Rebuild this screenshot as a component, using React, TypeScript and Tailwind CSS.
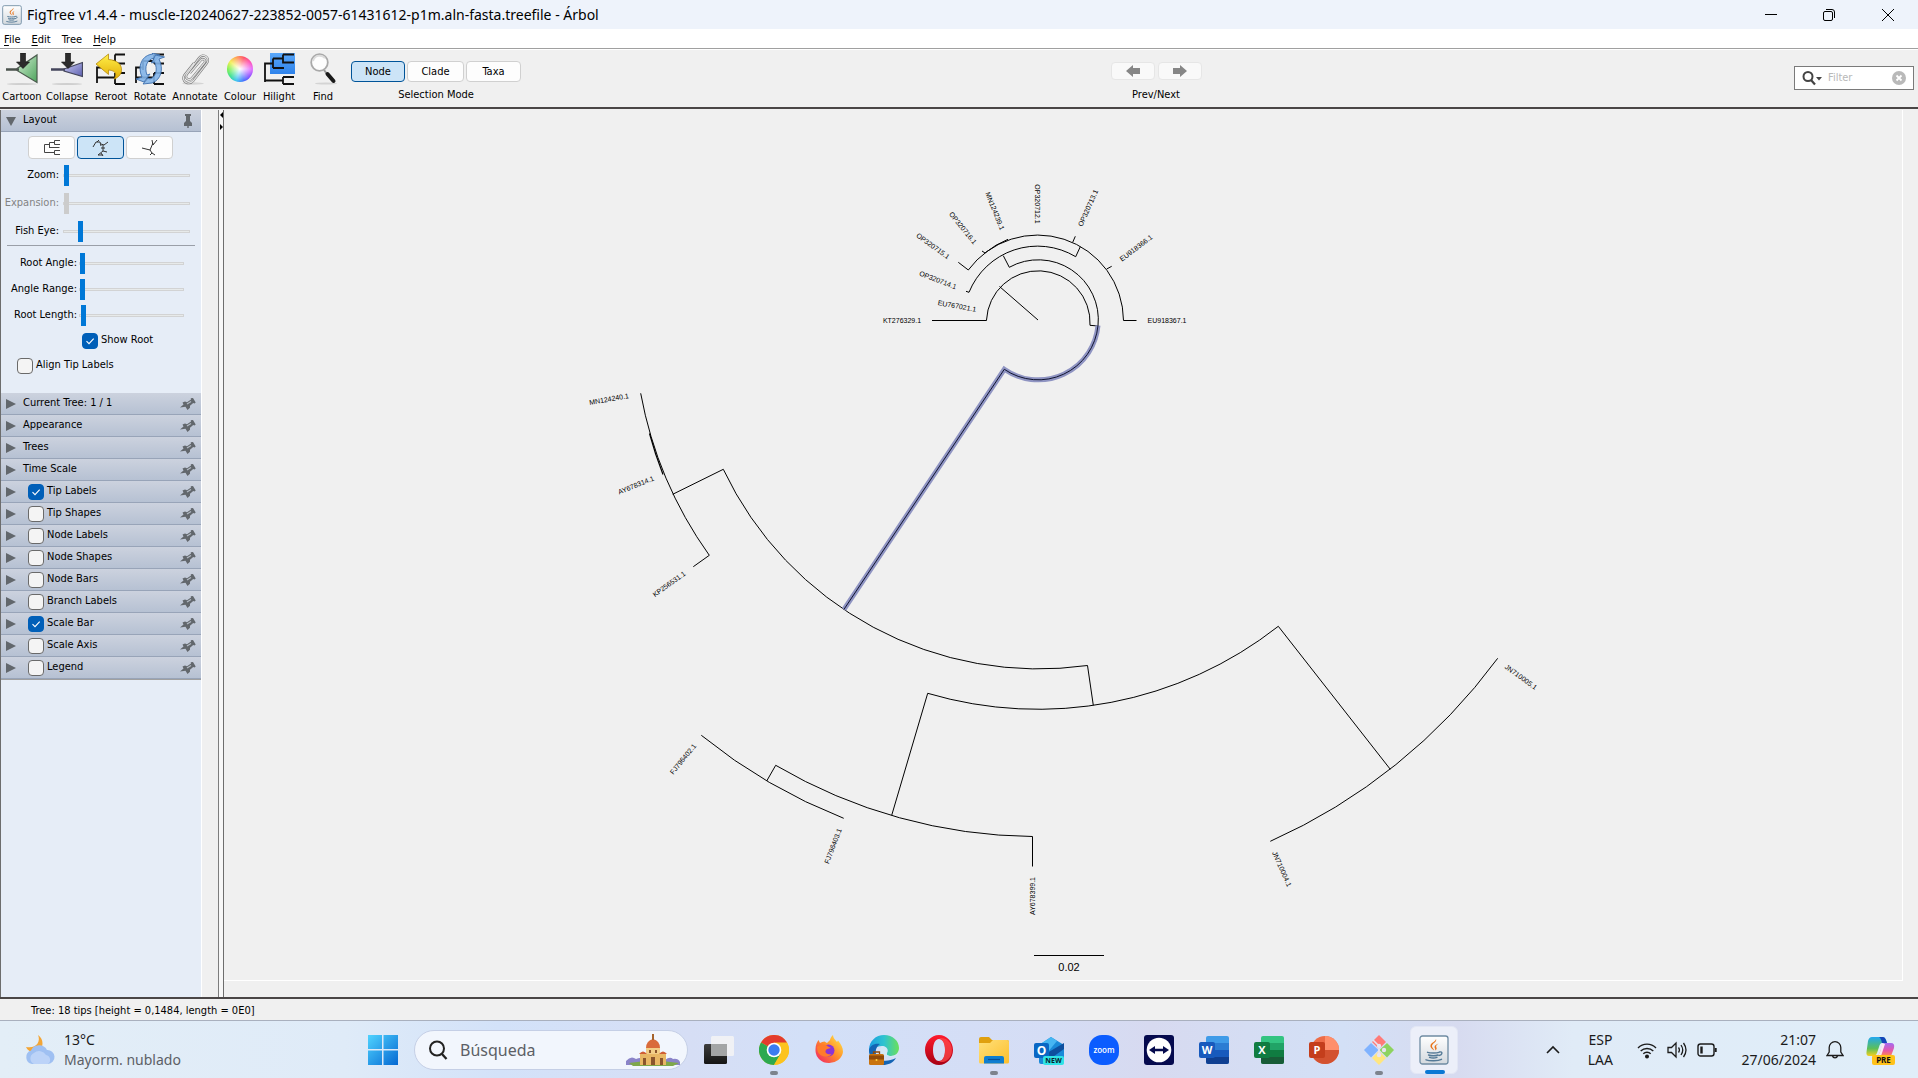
import React from "react";

const UI = "font-['DejaVu_Sans_Condensed','DejaVu_Sans',sans-serif] [font-stretch:condensed]";

/* ---------- small icons ---------- */

function JavaIcon({ className }: { className: string }) {
  return (
    <svg viewBox="0 0 30 30" className={className}>
      <defs>
        <linearGradient id="jv" x1="0" y1="0" x2="0" y2="1">
          <stop offset="0" stopColor="#ffffff" />
          <stop offset="1" stopColor="#d3d9de" />
        </linearGradient>
      </defs>
      <rect x="1" y="1" width="28" height="28" rx="2.5" fill="url(#jv)" stroke="#6f8ca3" strokeWidth="1.3" />
      <path d="M17 4c1.500 3-4.500 4.500-4 7.500.2 1.600 2 2.300 2.200 4-2.500-1.500-4.200-3-3.700-5.200C12.200 7.500 16.500 7 17 4z" fill="#e8731a" />
      <path d="M19.500 8.500c-2 .8-4 1.700-4 3.600 0 1.300 1.300 1.600.6 3.400 1.700-1 1.900-2.100 1.200-3.300-.8-1.300.7-2.500 2.200-3.700z" fill="#e8731a" />
      <path d="M8.500 17.300c3 1 9 1 11.500 0M9.500 20c2.700.9 7 .9 9.500 0M10.500 22.300c2 .7 5.500.7 7.500 0M20.500 17c3.500-.8 3 3-.5 3.500M7 24.800c4 1.500 12 1.300 15.500-.5" fill="none" stroke="#557a97" strokeWidth="1.4" strokeLinecap="round" />
    </svg>
  );
}

function ForkPaths() {
  return (
    <path d="M2 30V14.500h7M2 24.500h18M9 8v9M9 8h11M20 1.500v9M20 1.500h10M20 10.500h10M20 20v11M20 20h10M20 31h10" fill="none" stroke="#111" strokeWidth="1.800" />
  );
}

function ToolIcon({ name }: { name: string }) {
  const shadow = <ellipse cx="16" cy="31" rx="15" ry="1" fill="#cfcfcf" />;
  const down = <path d="M14.500 0h5v9h4l-6.500 6.500L10.500 9h4z" fill="#2c2c2c" stroke="#111" strokeWidth=".6" />;
  return (
    <svg viewBox="0 0 32 32" className="h-8 w-8">
      <defs>
        <linearGradient id="gGreen" x1="0" y1="0" x2="1" y2="1">
          <stop offset="0" stopColor="#d5f0d5" />
          <stop offset="1" stopColor="#4da45c" />
        </linearGradient>
        <linearGradient id="gPurple" x1="0" y1="0" x2="1" y2="1">
          <stop offset="0" stopColor="#c9caf2" />
          <stop offset="1" stopColor="#5d60b0" />
        </linearGradient>
        <linearGradient id="gBlue" x1="0" y1="0" x2="0" y2="1">
          <stop offset="0" stopColor="#5aa8fa" />
          <stop offset="1" stopColor="#2e82ea" />
        </linearGradient>
        <linearGradient id="gYellow" x1="0" y1="0" x2="0" y2="1">
          <stop offset="0" stopColor="#fff04a" />
          <stop offset="1" stopColor="#e3ae08" />
        </linearGradient>
      </defs>
      {name === "Cartoon" && (
        <>
          {shadow}
          <path d="M11 15.500 31 2v27.500L11 17.500z" fill="url(#gGreen)" stroke="#4b5b4e" strokeWidth="1.200" />
          <path d="M0 16.500h13" stroke="#4a524c" strokeWidth="2.500" />
          {down}
        </>
      )}
      {name === "Collapse" && (
        <>
          {shadow}
          <path d="M13 16 31.500 9.500V23.500L13 18z" fill="url(#gPurple)" stroke="#44465c" strokeWidth="1.200" />
          <path d="M0 16.500h14" stroke="#44465c" strokeWidth="2.500" />
          {down}
        </>
      )}
      {name === "Reroot" && (
        <>
          <ForkPaths />
          <path d="M1 11 13.500 1v5.500c8 .5 13.500 4.500 13 11-.4 4.600-4 7.500-7.500 8.500 3-4 2.500-8.500-5.500-9v4.500z" fill="url(#gYellow)" stroke="#b68a0c" strokeWidth=".8" />
        </>
      )}
      {name === "Rotate" && (
        <>
          <ForkPaths />
          <g fill="#83b4e8" stroke="#3d6fae" strokeWidth=".9" fillOpacity=".9">
            <path d="M8 24C3 13 8 2 19 1l-1-1 8 2-5 6-.5-3C13 6 10 14 13 22l3-1-6 8-8-3z" />
            <path d="M25 6c5 10 2 21-7 24l-9 1 5-6 2 1c6-2 8-10 4.500-17l-3 1 4-8 9 2z" />
          </g>
        </>
      )}
      {name === "Annotate" && (
        <>
          <ellipse cx="14" cy="30.500" rx="11" ry="1.200" fill="#d4d4d4" />
          <path d="M11 20 22 7c2-2.300 5.300.2 3.500 2.600L13 25c-3 3.600-8 0-5-4L20 5c4-5.500 11.500-.5 8 5L14.500 27.500c-5 5.800-13 .5-9-5.500L15 10" fill="none" stroke="#777" strokeWidth="2.300" />
          <path d="M11 20 22 7c2-2.300 5.300.2 3.500 2.600L13 25c-3 3.600-8 0-5-4L20 5c4-5.500 11.500-.5 8 5L14.500 27.500c-5 5.800-13 .5-9-5.500L15 10" fill="none" stroke="#e4e4e4" strokeWidth="1.200" />
        </>
      )}
      {name === "Hilight" && (
        <>
          <rect x="7" y="0" width="25" height="21" fill="url(#gBlue)" />
          <path d="M2 29V14.500M2 18.500v-8h8M10 5.500V15M10 5.500h10M10 15h11M20 1.500h11M20 1.500v8h11M2 27.500h18M20 24v7M20 24h11M20 31h11" fill="none" stroke="#111" strokeWidth="1.800" />
        </>
      )}
      {name === "Find" && (
        <>
          <ellipse cx="19" cy="30.500" rx="11" ry="1" fill="#d4d4d4" />
          <path d="m17 17 3 4" stroke="#999" strokeWidth="2" />
          <path d="m20.500 21 6 7" stroke="#1a1a1a" strokeWidth="4" strokeLinecap="round" />
          <circle cx="12.500" cy="9.500" r="8.300" fill="#fdfdfd" stroke="#a9a9a9" strokeWidth="1.800" />
          <path d="M6 8a7 7 0 0 1 12-3" stroke="#dcdcdc" strokeWidth="2" fill="none" />
        </>
      )}
    </svg>
  );
}

function ColourWheel() {
  return (
    <span className="flex h-8 w-8 items-center justify-center">
      <span className="h-[26px] w-[26px] rounded-full bg-[radial-gradient(circle,#fff_0%,#ffffff00_70%),conic-gradient(from_90deg,#e36bff,#8a4bff,#3f6bff,#35c3f0,#35e08a,#7cf04a,#f3ef4d,#ff9c4d,#ff4b5c,#ff4bb0,#e36bff)]" />
    </span>
  );
}

function Pin({ up = false }: { up?: boolean }) {
  return up ? (
    <svg viewBox="0 0 16 16" className="h-4 w-4">
      <path d="M5 1h6v2h-1v5l2 2v3H4v-3l2-2V3H5zM7.300 12h1.400v3H7.300z" fill="#62676c" />
    </svg>
  ) : (
    <svg viewBox="0 0 16 16" className="h-4 w-4">
      <path d="M0 11.500 3.500 8.500 2.500 6.500 5 5.500l2 .8L11 3.500l-.3-1.300L13 2l2.700 4.500-1.200 1L13.200 7 10 9.800v2L7.500 14 5.500 10.800z" fill="#62676c" />
      <path d="m7 8 4-2.500" stroke="#b5bcc6" strokeWidth="1.100" />
    </svg>
  );
}

/* ---------- controls ---------- */

function Check({ id, label, checked = false }: { id: string; label: string; checked?: boolean }) {
  return (
    <label htmlFor={id} className="flex items-center gap-[3px]">
      <span className="relative flex h-4 w-4">
        <input
          id={id}
          type="checkbox"
          defaultChecked={checked}
          className="peer h-4 w-4 appearance-none rounded-[4px] border border-[#6a6a6a] bg-[#f4f4f4] checked:border-[#005fb8] checked:bg-[#005fb8]"
        />
        <svg viewBox="0 0 16 16" className="pointer-events-none absolute inset-0 hidden h-4 w-4 peer-checked:block">
          <path d="m4.500 8.200 2.500 2.500 4.700-5" fill="none" stroke="#fff" strokeWidth="1.100" />
        </svg>
      </span>
      <span>{label}</span>
    </label>
  );
}

function SliderRow({ label, value, disabled = false, root = false }: { label: string; value: number; disabled?: boolean; root?: boolean }) {
  const id = "s-" + label.replace(" ", "-");
  return (
    <div className={root ? "flex h-[26px] items-center pr-[17px]" : "flex h-7 items-center pr-[11px]"}>
      <label htmlFor={id} className={(root ? "w-[76px]" : "w-[58px]") + " shrink-0 text-right whitespace-nowrap " + (disabled ? "text-[#838383]" : "")}>
        {label}:
      </label>
      <input
        id={id}
        type="range"
        min={0}
        max={1000}
        defaultValue={value}
        disabled={disabled}
        className={
          (root ? "ml-[2px]" : "ml-1") +
          " h-[21px] w-full min-w-0 appearance-none bg-transparent [&::-webkit-slider-runnable-track]:h-[3px] [&::-webkit-slider-runnable-track]:border [&::-webkit-slider-runnable-track]:border-[#d2d3d4] [&::-webkit-slider-runnable-track]:bg-[#e7eaea] [&::-webkit-slider-thumb]:-mt-[10px] [&::-webkit-slider-thumb]:h-[21px] [&::-webkit-slider-thumb]:w-[5px] [&::-webkit-slider-thumb]:appearance-none " +
          (disabled ? "[&::-webkit-slider-thumb]:bg-[#cccccc]" : "[&::-webkit-slider-thumb]:bg-[#0078d7]")
        }
      />
    </div>
  );
}

const header = "flex h-[22px] items-center border-b border-[#98a4b8] bg-linear-to-b from-[#ccd2de] to-[#b6c1d3] pr-[5px] pl-[5px]";

function Section({ title, check, on }: { title: string; check?: boolean; on?: boolean }) {
  return (
    <div className={header}>
      <button aria-label={"Expand " + title} className="flex h-3 w-[22px] items-center">
        <svg viewBox="0 0 10 10" className="h-[10px] w-[10px]">
          <path d="M0 0 10 5 0 10z" fill="#62676c" />
        </svg>
      </button>
      {check ? (
        <Check id={"c-" + title.replace(" ", "-")} label={title} checked={on} />
      ) : (
        <span className="-ml-[5px]">{title}</span>
      )}
      <button aria-label={"Pin " + title} className="ml-auto">
        <Pin />
      </button>
    </div>
  );
}

/* ---------- tree ---------- */

const CX = 1038;
const CY = 320;

const tips: { t: string; x: number; y: number; a: number }[] = [
  { t: "KT276329.1", x: 902, y: 320, a: 0 },
  { t: "EU767021.1", x: 957, y: 306, a: 10 },
  { t: "OP320714.1", x: 938, y: 280, a: 21 },
  { t: "OP320715.1", x: 933, y: 246, a: 36 },
  { t: "OP320716.1", x: 963, y: 228, a: 51 },
  { t: "MN124239.1", x: 995, y: 211, a: 68 },
  { t: "OP320712.1", x: 1037, y: 204, a: 90 },
  { t: "OP320713.1", x: 1088, y: 208, a: -66 },
  { t: "EU918366.1", x: 1136, y: 248, a: -37 },
  { t: "EU918367.1", x: 1167, y: 320, a: 0 },
  { t: "MN124240.1", x: 609, y: 399, a: -10 },
  { t: "AY678314.1", x: 636, y: 485, a: -22 },
  { t: "KP256531.1", x: 669, y: 584, a: -36 },
  { t: "FJ796402.1", x: 683, y: 759, a: -51 },
  { t: "FJ796403.1", x: 833, y: 846, a: -69 },
  { t: "AY678399.1", x: 1032, y: 896, a: -90 },
  { t: "JN710004.1", x: 1282, y: 869, a: 66 },
  { t: "JN710005.1", x: 1521, y: 677, a: 36 },
];

const highlight = "M1098 325.500A60 60 0 0 1 1004.300 369.300L844 609.300";

function TreeDrawing() {
  return (
    <svg viewBox="224 110 1678 870" className="h-full w-full" role="img" aria-label="Polar tree">
      <g fill="none" stroke="#000" strokeWidth="1">
        <path d={`M${CX} ${CY} 999.500 286.500`} />
        <path d="M932 320.500h54.500V320A51.600 51.600 0 1 1 1090 325.300L1098 326" />
        <path d="M1098 326A60 60 0 0 0 1009.300 267.300L1003.300 255.700" />
        <path d="M966 291.300 969 292.300A74 74 0 0 1 1075.700 256.700L1080.300 246.700" />
        <path d="M958.300 262.300 968.300 270A86 86 0 0 1 1123.500 320.500H1136.500" />
        <path d="M982 251 985 253A86 86 0 0 1 1008 239.300" />
        <path d="M1072.700 242.300 1075.300 236.300M1106.700 269 1111.700 266.300" />
        <path d="M723.300 469.300A349 349 0 0 0 1087.500 665.500L1093.300 705.300" />
        <path d="M672.700 494.300 723.300 469.300" />
        <path d="M640.700 393.300A404.500 404.500 0 0 0 709.300 555.300L693.300 566.700" />
        <path d="M649.500 433.500A404.500 404.500 0 0 0 663 474.500" strokeWidth="1.200" />
        <path d="M927.700 693.300A389.200 389.200 0 0 0 1278.300 626.300L1390.300 769.300" />
        <path d="M1270.300 841.300A570.600 570.600 0 0 0 1497.700 658.300" />
        <path d="M927.700 693.300 891.700 815.300" />
        <path d="M766.700 781 775.700 765.300A516.500 516.500 0 0 0 1032.500 836.500V866.500" />
        <path d="M701.300 735.300A535 535 0 0 0 843.700 818.300" />
      </g>
      <path d={highlight} fill="none" stroke="#8f94c2" strokeWidth="5" />
      <path d={highlight} fill="none" stroke="#101431" strokeWidth="1" />
      <g className="font-['Liberation_Sans',Arial,sans-serif] text-[7px]" fill="#000" textAnchor="middle">
        {tips.map((p) => (
          <text key={p.t} transform={`translate(${p.x} ${p.y}) rotate(${p.a})`} dominantBaseline="central">
            {p.t}
          </text>
        ))}
      </g>
      <path d="M1034 955.500h70" stroke="#000" />
      <text x="1069" y="971" textAnchor="middle" className="font-['Liberation_Sans',Arial,sans-serif] text-[11px]">
        0.02
      </text>
    </svg>
  );
}

/* ---------- taskbar ---------- */

function AppIcon({ name }: { name: string }) {
  const office = (c: string[], letter: string, box: string) => (
    <>
      <rect x="7" y="1" width="23" height="28" rx="2" fill={c[0]} />
      <path d="M7 8h23v7H7z" fill={c[1]} />
      <path d="M7 15h23v7H7z" fill={c[2]} />
      <path d="M7 22h23v5a2 2 0 0 1-2 2H9a2 2 0 0 1-2-2z" fill={c[3]} />
      <rect x="0" y="7" width="16" height="16" rx="2" fill={box} />
      <text x="8" y="19" textAnchor="middle" fontSize="11" fontWeight="700" fill="#fff">{letter}</text>
    </>
  );
  return (
    <svg viewBox="0 0 30 30" className="h-[30px] w-[30px] font-['Open_Sans',sans-serif]">
      <defs>
        <linearGradient id="aEdge" x1="0" y1="0" x2="1" y2="0">
          <stop offset="0" stopColor="#1b9de2" /><stop offset=".5" stopColor="#2fc3d0" /><stop offset="1" stopColor="#6be05a" />
        </linearGradient>
        <linearGradient id="aFf" x1="1" y1="0" x2="0" y2="1">
          <stop offset="0" stopColor="#fff04a" /><stop offset=".5" stopColor="#ff8a2a" /><stop offset="1" stopColor="#f0196e" />
        </linearGradient>
        <linearGradient id="aOp" x1="0" y1="0" x2="0" y2="1">
          <stop offset="0" stopColor="#ff1b2d" /><stop offset="1" stopColor="#a70014" />
        </linearGradient>
        <linearGradient id="aFold" x1="0" y1="0" x2="1" y2="1">
          <stop offset="0" stopColor="#ffe07a" /><stop offset="1" stopColor="#fcbf2c" />
        </linearGradient>
        <linearGradient id="aWin" x1="0" y1="0" x2="1" y2="1">
          <stop offset="0" stopColor="#4fd3ff" /><stop offset="1" stopColor="#0568d2" />
        </linearGradient>
        <linearGradient id="aTv" x1="0" y1="0" x2="0" y2="1">
          <stop offset="0" stopColor="#3d3d3d" /><stop offset="1" stopColor="#151515" />
        </linearGradient>
      </defs>
      {name === "Inicio" && <path d="M0 0h14v14H0zM15.500 0H30v14H15.500zM0 15.500h14V30H0zM15.500 15.500H30V30H15.500z" fill="url(#aWin)" />}
      {name === "Vista de tareas" && (
        <>
          <rect x="0" y="9" width="23" height="20" rx="1.500" fill="url(#aTv)" />
          <rect x="7" y="1" width="23" height="20" rx="1.500" fill="#f4f4f4" fillOpacity=".85" />
          <path d="M7 9h16v12H7z" fill="#a3a5a6" />
        </>
      )}
      {name === "Chrome" && (
        <>
          <circle cx="15" cy="15" r="15" fill="#fcc31e" />
          <path d="M15 15 2 7.500A15 15 0 0 1 28 7.500z" fill="#e33b2e" />
          <path d="M15 15 2 7.500A15 15 0 0 0 15 30l6.500-11z" fill="#2da94f" />
          <path d="M15 7.500h13A15 15 0 0 1 15 30l6.500-11z" fill="#fcc31e" />
          <circle cx="15" cy="15" r="7.300" fill="#fff" />
          <circle cx="15" cy="15" r="5.700" fill="#3a7cf0" />
        </>
      )}
      {name === "Firefox" && (
        <>
          <path d="M1.500 14C1.500 10 3 7 4.500 5l1.500 3c1.500-1 3-1.500 4.500-1.500L13 8l3-3c.5-2 1.500-4 3-5 0 3 2 4.500 4 7l1-1.500c3 3.500 5 7 5 11.500a13.800 12.500 0 0 1-27.500-1z" fill="url(#aFf)" />
          <circle cx="14.500" cy="15.500" r="6" fill="#8a34d6" />
          <path d="M3 12c3-3 8-3.500 11-.5l3 1.500c-3 .5-5 1-5.500 3s2.500 4 6 3c-3 4.500-12 3-14-3z" fill="#ff7b2c" />
        </>
      )}
      {name === "Edge" && (
        <>
          <path d="M0 15C0 6 7 0 15 0c9 0 15 6 15 13 0 5-4 8-8 8-3 0-5-1-4-3 2-3 0-7-5-7C7 11 0 15 0 20z" fill="url(#aEdge)" />
          <path d="M0 15c1-4 5-7 11-6-3 2-5 6-4 10 2 7 10 9 20 4-3 5-8 7-13 7C6 30 0 23 0 15z" fill="#1464b4" />
          <path d="M13 11c4 0 6 4 5 7-1 2 1 3 4 3 3 0 6-1 8-4-1 4-4 5-8 5-6 0-10-3-11-6 0-2 1-4 2-5z" fill="#d3e8f6" />
          <rect x="0" y="19" width="15" height="11" rx="1.500" fill="#c9730f" />
          <path d="M0 20.500h15v4H0z" fill="#8f4a0a" /><path d="M4.500 19v-2h6v2" fill="none" stroke="#8f4a0a" strokeWidth="1.300" />
          <circle cx="7.500" cy="25" r="1" fill="#ffd23e" />
        </>
      )}
      {name === "Opera" && (
        <>
          <path fillRule="evenodd" d="M15 0c8 0 14 7 14 15s-6 15-14 15S1 23 1 15 7 0 15 0zm0 4c-4 0-6 5-6 11s2 11 6 11 6-5 6-11-2-11-6-11z" fill="url(#aOp)" />
          <path d="M15 4c2-3 13 0 13 11S17 29 15 26c4 0 6-5 6-11S19 4 15 4z" fill="#ff4b4b" fillOpacity=".7" />
        </>
      )}
      {name === "Explorador" && (
        <>
          <path d="M0 4q0-2 2-2h8l3 3h15q2 0 2 2v5H0z" fill="#e0a00f" />
          <path d="M0 8h11l3-3h14q2 0 2 2v20q0 1.500-1.500 1.500h-27Q0 28.500 0 27z" fill="url(#aFold)" />
          <path d="M5 28.500V23q0-2 2-2h16q2 0 2 2v5.500z" fill="#0f7ed0" /><path d="M9 24.500h12" stroke="#0a4f94" strokeWidth="1.200" />
        </>
      )}
      {name === "Outlook" && (
        <>
          <path d="M5 10 17 2l13 8v17q0 2-2 2H7q-2 0-2-2z" fill="#1a8ad8" />
          <path d="M5 10 17 2l6 4-10 12z" fill="#46b6f2" /><path d="M13 18 30 8v6L16 24z" fill="#0e4f9e" />
          <rect x="0" y="8" width="15" height="15" rx="2" fill="#0a67c4" />
          <text x="7.500" y="20" textAnchor="middle" fontSize="12" fontWeight="700" fill="#fff">O</text>
          <rect x="9" y="21" width="21" height="9" rx="2" fill="#2fe3e6" />
          <text x="19.500" y="28.300" textAnchor="middle" fontSize="7" fontWeight="700" fill="#06222e">NEW</text>
        </>
      )}
      {name === "Zoom" && (
        <>
          <rect x="0" y="0" width="30" height="30" rx="13" fill="#0b5cff" />
          <text x="15" y="17.500" textAnchor="middle" fontSize="8" fontWeight="600" fill="#fff">zoom</text>
        </>
      )}
      {name === "TeamViewer" && (
        <>
          <rect width="30" height="30" rx="3" fill="#050a4e" />
          <circle cx="15" cy="15" r="12.300" fill="#fff" />
          <path d="m5 15 6-4v2.700h8V11l6 4-6 4v-2.700h-8V19z" fill="#050a4e" />
        </>
      )}
      {name === "Word" && office(["#3f9be8", "#2b7cd3", "#185abd", "#103f91"], "W", "#185abd")}
      {name === "Excel" && office(["#33c481", "#21a366", "#107c41", "#185c37"], "X", "#107c41")}
      {name === "PowerPoint" && (
        <>
          <circle cx="16" cy="15" r="14" fill="#ed6c47" />
          <path d="M16 1a14 14 0 0 1 14 14H16z" fill="#ff8f6b" /><path d="M2 15h28a14 14 0 0 1-28 0z" fill="#d35230" />
          <rect x="0" y="7" width="16" height="16" rx="2" fill="#c43e1c" />
          <text x="8" y="19" textAnchor="middle" fontSize="11" fontWeight="700" fill="#fff">P</text>
        </>
      )}
      {name === "Git" && (
        <>
          <path d="m15 0 7 7-7 7-7-7z" fill="#ff7b78" /><path d="m7 8 7.500 7L7 22.500 0 15z" fill="#80b3ff" />
          <path d="m23 8 7 7-7 7.500L15.500 15z" fill="#8dd35f" /><path d="m15 16 7 7-7 7-7-7z" fill="#ffe680" />
          <path d="m9 5 6 6v10" stroke="#e6e4f2" strokeWidth="1.600" fill="none" />
          <circle cx="15" cy="11" r="2.200" fill="#e6e4f2" /><circle cx="15" cy="20" r="2.200" fill="#e6e4f2" /><circle cx="20" cy="15" r="2.200" fill="#e6e4f2" />
        </>
      )}
    </svg>
  );
}

const apps = ["Vista de tareas", "Chrome", "Firefox", "Edge", "Opera", "Explorador", "Outlook", "Zoom", "TeamViewer", "Word", "Excel", "PowerPoint", "Git"];
const running = ["Chrome", "Explorador", "Git"];

function Taskbar() {
  return (
    <footer className="flex h-[57px] shrink-0 items-center pr-[22px] font-['Noto_Sans','Open_Sans',sans-serif] text-sm text-[#1b1b1b] [background-image:linear-gradient(90deg,#e3eef7_0%,#dfebf8_18%,#d3e2f9_26%,#d6def5_36%,#d3e0f8_42%,#d5ddf5_55%,#d7daf0_60%,#d3e0f6_70%,#d7dbf0_76%,#e0ebf7_82%,#e0eef9_100%)]">
      <button className="flex w-[343px] items-center gap-2 pl-6 text-left">
        <svg viewBox="0 0 32 32" className="h-8 w-8">
          <path d="M14 1c3 7-2 14-12 12 2 5 8 6 12 4 6-3 6-12 0-16z" fill="#f3a535" />
          <path d="M8 30a7 7 0 0 1-1-13.500 9 9 0 0 1 16-.500A7 7 0 0 1 24 30z" fill="#9fc0f2" />
          <path d="M10 30a6 6 0 0 1 0-11 8 8 0 0 1 12 2 5 5 0 0 1 2 9z" fill="#bcd3f8" />
        </svg>
        <span className="flex flex-col leading-5">
          <span>13°C</span>
          <span className="text-[#5c6066]">Mayorm. nublado</span>
        </span>
      </button>
      <button aria-label="Inicio" className="ml-6 flex w-[31px] items-center justify-center">
        <AppIcon name="Inicio" />
      </button>
      <label className="ml-4 flex h-10 w-[274px] items-center rounded-full border border-[#c5cfe6] bg-[#f2f6fd] pr-[6px] pl-[13px]">
        <svg viewBox="0 0 20 20" className="h-5 w-5">
          <circle cx="9" cy="8.500" r="7" fill="none" stroke="#222" strokeWidth="2" />
          <path d="m14 14 4.500 5" stroke="#222" strokeWidth="2.300" />
        </svg>
        <input aria-label="Búsqueda" placeholder="Búsqueda" className="ml-3 min-w-0 flex-1 bg-transparent text-base outline-none placeholder:text-[#5c6066]" />
        <svg viewBox="0 0 56 32" className="h-8 w-14">
          <path d="M1 27q5-6 10-2 6-3 8 2v4H1zM40 26q5-4 8-1 5-1 7 3v3H40z" fill="#8b84c9" />
          <path d="M4 29q24-4 50 0l-6 3H8z" fill="#7fa84a" />
          <path d="M15 20h26v11H15z" fill="#e8b765" />
          <path d="M21 14h14v6H21z" fill="#f2ce87" />
          <path d="M21 14q0-7 7-9 7 2 7 9z" fill="#d96b3b" />
          <path d="M27 0h2v6h-2z" fill="#a5632c" />
          <path d="M14 20q4-5 8 0zM34 20q4-5 8 0z" fill="#cf5f35" />
          <path d="M18 24h3v7h-3zM26 23h4v8h-4zM35 24h3v7h-3zM24 16h2v3h-2zM30 16h2v3h-2z" fill="#8a552c" />
        </svg>
      </label>
      <nav className="ml-[3px] flex h-full items-center">
        {apps.map((a) => (
          <button key={a} aria-label={a} className="relative flex h-12 w-[55px] items-center justify-center">
            <AppIcon name={a} />
            {running.includes(a) && <span className="absolute -bottom-px left-6 h-1 w-2 rounded-full bg-[#7d838d]" />}
          </button>
        ))}
        <button aria-label="Java" className="relative ml-1 flex h-12 w-12 items-center justify-center rounded-md border border-[#e3e7f5] bg-[#eceff9]">
          <JavaIcon className="h-[30px] w-[30px]" />
          <span className="absolute -bottom-px left-[14px] h-1 w-5 rounded-full bg-[#0a78d4]" />
        </button>
      </nav>
      <div className="ml-auto flex items-center">
        <button aria-label="Mostrar iconos ocultos">
          <svg viewBox="0 0 14 14" className="h-[14px] w-[14px]"><path d="m1 10 6-6 6 6" fill="none" stroke="#1b1b1b" strokeWidth="1.600" /></svg>
        </button>
        <button className="ml-7 flex flex-col items-center leading-5">
          <span>ESP</span>
          <span>LAA</span>
        </button>
        <button aria-label="Red, volumen y batería" className="ml-6 flex items-center gap-[10px]">
          <svg viewBox="0 0 20 20" className="h-5 w-5" fill="none" stroke="#1b1b1b" strokeWidth="1.400">
            <path d="M1 8a12.500 12.500 0 0 1 18 0M3.700 11a9 9 0 0 1 12.600 0M6.300 13.800a5.300 5.300 0 0 1 7.400 0" />
            <circle cx="10" cy="16.500" r="1.300" fill="#1b1b1b" />
          </svg>
          <svg viewBox="0 0 20 20" className="h-5 w-5" fill="none" stroke="#1b1b1b" strokeWidth="1.300">
            <path d="M1 7.500h3.500L9 3v14l-4.500-4.500H1zM11.500 7.500q1.800 2.500 0 5M14 5q3.500 5 0 10M16.500 3q5 7 0 14" />
          </svg>
          <svg viewBox="0 0 20 20" className="h-5 w-5" fill="none" stroke="#1b1b1b" strokeWidth="1.400">
            <rect x="1" y="4" width="16" height="12" rx="2.500" />
            <path d="M18.700 8v4" strokeWidth="2" /><path d="M4.500 6.500v7" strokeWidth="2.400" />
          </svg>
        </button>
        <button className="ml-5 flex w-[79px] flex-col items-end leading-5">
          <span>21:07</span>
          <span>27/06/2024</span>
        </button>
        <button aria-label="Notificaciones" className="ml-[10px]">
          <svg viewBox="0 0 18 20" className="h-5 w-[18px]" fill="none" stroke="#1b1b1b" strokeWidth="1.300">
            <path d="M1 15.500 3.200 12V7.500a5.800 5.800 0 0 1 11.600 0V12l2.200 3.500zM6.500 16a2.600 2.600 0 0 0 5 0" />
          </svg>
        </button>
        <button aria-label="Copilot" className="ml-[22px]">
          <svg viewBox="0 0 30 30" className="h-[30px] w-[30px]">
            <defs>
              <linearGradient id="cpA" x1="0" y1="0" x2="0" y2="1"><stop offset="0" stopColor="#22a8f0" /><stop offset=".6" stopColor="#5bbf5a" /><stop offset="1" stopColor="#f5d020" /></linearGradient>
              <linearGradient id="cpB" x1="0" y1="0" x2="0" y2="1"><stop offset="0" stopColor="#a36bf2" /><stop offset=".6" stopColor="#e857a8" /><stop offset="1" stopColor="#ff8a4c" /></linearGradient>
            </defs>
            <path d="M6 2h11q2 0 3 3l1 3h-5q-2 0-3 4l-2 6q-1 3-4 3H3q-3 0-2.500-4L2 6q1-4 4-4z" fill="url(#cpA)" />
            <path d="M13 2h4q2 0 3 3l1 3h-5q-1-5-3-6z" fill="#1546b8" />
            <path d="M19 8h6q4 0 3 5l-3 8H11q2-1 3-4l2-6q1-3 3-3z" fill="url(#cpB)" />
            <path d="M16 9h3l-4 12h-4q2-1 3-4z" fill="#fbe9f2" />
            <rect x="6" y="20" width="23" height="10" rx="2" fill="#ffc21a" />
            <text x="17.500" y="28" textAnchor="middle" fontSize="8" fontWeight="700" fill="#111">PRE</text>
          </svg>
        </button>
      </div>
    </footer>
  );
}

/* ---------- window ---------- */

const tools: { n: string; w: string }[] = [
  { n: "Cartoon", w: "w-11" },
  { n: "Collapse", w: "w-[46px]" },
  { n: "Reroot", w: "w-[42px]" },
  { n: "Rotate", w: "w-9" },
  { n: "Annotate", w: "w-[54px]" },
  { n: "Colour", w: "w-9" },
  { n: "Hilight", w: "w-[42px]" },
  { n: "Find", w: "w-[46px]" },
];

const sections: { t: string; check?: boolean; on?: boolean }[] = [
  { t: "Current Tree: 1 / 1" },
  { t: "Appearance" },
  { t: "Trees" },
  { t: "Time Scale" },
  { t: "Tip Labels", check: true, on: true },
  { t: "Tip Shapes", check: true },
  { t: "Node Labels", check: true },
  { t: "Node Shapes", check: true },
  { t: "Node Bars", check: true },
  { t: "Branch Labels", check: true },
  { t: "Scale Bar", check: true, on: true },
  { t: "Scale Axis", check: true },
  { t: "Legend", check: true },
];

const plainBtn = "flex items-center justify-center rounded-[4px] border border-[#d0d0d0] bg-[#fdfdfd]";
const activeBtn = "flex items-center justify-center rounded-[4px] border border-[#005499] bg-[#cce4f7]";

export default function App() {
  return (
    <div className="flex h-screen flex-col overflow-hidden bg-[#f0f0f0] text-black">
      <header className="flex h-[29px] shrink-0 items-center bg-[#eef3fb] pl-[2px] font-['Noto_Sans','Open_Sans',sans-serif] text-sm">
        <JavaIcon className="h-5 w-5" />
        <h1 className="ml-[5px]">FigTree v1.4.4 - muscle-I20240627-223852-0057-61431612-p1m.aln-fasta.treefile - Árbol</h1>
        <div className="ml-auto flex">
          <button aria-label="Minimizar" className="flex w-[58px] justify-center">
            <svg viewBox="0 0 12 12" className="h-3 w-3"><path d="M0 5.500h12" stroke="#000" /></svg>
          </button>
          <button aria-label="Restaurar" className="flex w-[58px] justify-center">
            <svg viewBox="0 0 12 12" className="h-3 w-3" fill="none" stroke="#000"><rect x=".5" y="2.500" width="9" height="9" rx="1.500" /><path d="M3 .5h6a2.500 2.500 0 0 1 2.500 2.500v6" /></svg>
          </button>
          <button aria-label="Cerrar" className="flex w-[60px] justify-center">
            <svg viewBox="0 0 12 12" className="h-3 w-3"><path d="m0 0 12 12M12 0 0 12" stroke="#000" /></svg>
          </button>
        </div>
      </header>

      <nav className={UI + " flex h-5 shrink-0 items-center gap-[11px] border-b border-[#a0a0a0] bg-white pt-[3px] pl-1 text-[11px]"}>
        {["File", "Edit", "Tree", "Help"].map((m) => (
          <button key={m}>
            {m === "Tree" ? m : <><u className="underline-offset-2">{m[0]}</u>{m.slice(1)}</>}
          </button>
        ))}
      </nav>

      <div className={UI + " flex h-[60px] shrink-0 border-t border-b-2 border-t-white border-b-[#4a4646] text-[11px] leading-[14px]"}>
        <div className="flex pt-[3px]">
          {tools.map((t) => (
            <button key={t.n} className={t.w + " flex flex-col items-center gap-[5px]"}>
              {t.n === "Colour" ? <ColourWheel /> : <ToolIcon name={t.n} />}
              <span>{t.n}</span>
            </button>
          ))}
        </div>
        <div className="flex flex-col items-center gap-[6px] pt-[11px] pl-[5px]">
          <div className="flex gap-[2px]">
            <button className={activeBtn + " h-[21px] w-[54px]"}>Node</button>
            <button className={plainBtn + " h-[21px] w-[57px]"}>Clade</button>
            <button className={plainBtn + " h-[21px] w-[55px]"}>Taxa</button>
          </div>
          <span>Selection Mode</span>
        </div>
        <div className="flex flex-1 flex-col items-center gap-2 pt-3 pr-[3px]">
          <div className="flex gap-[3px]">
            <button aria-label="Previous" className="flex h-[18px] w-11 items-center justify-center rounded-[4px] border border-[#e6e6e6] bg-[#f9f9f9]">
              <svg viewBox="0 0 14 12" className="h-3 w-[14px]"><path d="M0 6 7 0v3h7v6H7v3z" fill="#868686" /></svg>
            </button>
            <button aria-label="Next" className="flex h-[18px] w-11 items-center justify-center rounded-[4px] border border-[#e6e6e6] bg-[#f9f9f9]">
              <svg viewBox="0 0 14 12" className="h-3 w-[14px]"><path d="M14 6 7 0v3H0v6h7v3z" fill="#868686" /></svg>
            </button>
          </div>
          <span>Prev/Next</span>
        </div>
        <label className="mt-4 mr-1 flex h-6 w-[120px] items-center border border-[#7a7a7a] bg-white px-[7px]">
          <svg viewBox="0 0 20 16" className="h-4 w-5">
            <circle cx="6" cy="6.500" r="4.500" fill="none" stroke="#444" strokeWidth="2" />
            <path d="m9 10 4 4.500" stroke="#444" strokeWidth="2.200" />
            <path d="M14 7h6l-3 3.500z" fill="#444" />
          </svg>
          <input aria-label="Filter" placeholder="Filter" className="ml-[6px] min-w-0 flex-1 bg-transparent outline-none placeholder:text-[#b8b8b8]" />
          <svg viewBox="0 0 14 14" className="h-[14px] w-[14px]"><circle cx="7" cy="7" r="7" fill="#b9b9b9" /><path d="m4.500 4.500 5 5m0-5-5 5" stroke="#fff" strokeWidth="1.800" /></svg>
        </label>
      </div>

      <main className="flex min-h-0 flex-1 pt-px">
        <aside className={UI + " w-[202px] shrink-0 border-r border-l border-r-white border-l-[#6d6d6d] bg-[#e6edf7] text-[11px]"}>
          <div className={header}>
            <button aria-label="Collapse Layout" className="flex h-3 w-[17px] items-center">
              <svg viewBox="0 0 10 10" className="h-[10px] w-[10px]"><path d="M0 1h10L5 10z" fill="#62676c" /></svg>
            </button>
            <span>Layout</span>
            <button aria-label="Pin Layout" className="ml-auto"><Pin up /></button>
          </div>
          <div className="flex h-[261px] flex-col">
            <div className="mt-1 flex gap-[2px] pl-[27px]">
              <button aria-label="Rectangular tree" className={plainBtn + " h-[23px] w-[47px]"}>
                <svg viewBox="0 0 18 18" className="h-[18px] w-[18px]" fill="none" stroke="#444"><path d="M7 5.500H1.500v8H11M6.500 9V3.500H11M6.500 8.500h10M17 1.500h-5.500v4H17M17 11.500h-5.500v4H17" /></svg>
              </button>
              <button aria-label="Polar tree" className={activeBtn + " h-[23px] w-[47px]"}>
                <svg viewBox="0 0 18 18" className="h-[18px] w-[18px]" fill="none" stroke="#333"><path d="M1 8 4 3h4l1 4M5 3l2-2M9 5l3 1 4-3M11 6v6M9 9h4M11 12l4 1M11 12l-5 4M9 14l2 3M6 16h5" /></svg>
              </button>
              <button aria-label="Radial tree" className={plainBtn + " h-[23px] w-[47px]"}>
                <svg viewBox="0 0 18 18" className="h-[18px] w-[18px]" fill="none" stroke="#333"><path d="m1 9 8 2 3-7M11 1l1 5 4-5M9 11l2 3-2 2M11 14l3 2" /></svg>
              </button>
            </div>
            <div className="mt-[2px]">
              <SliderRow label="Zoom" value={0} />
              <SliderRow label="Expansion" value={0} disabled />
              <SliderRow label="Fish Eye" value={116} />
            </div>
            <div className="mr-[6px] ml-[6px] border-t border-[#9a9fa8]" />
            <div className="mt-1">
              <SliderRow label="Root Angle" value={0} root />
              <SliderRow label="Angle Range" value={0} root />
              <SliderRow label="Root Length" value={12} root />
            </div>
            <div className="flex h-[25px] items-center pl-[81px]">
              <Check id="show-root" label="Show Root" checked />
            </div>
            <div className="flex h-[25px] items-center pl-4">
              <Check id="align-tips" label="Align Tip Labels" />
            </div>
          </div>
          {sections.map((s) => (
            <Section key={s.t} title={s.t} check={s.check} on={s.on} />
          ))}
          <div className="border-t border-[#a0a0a0]" />
        </aside>

        <div className="w-4 shrink-0" />
        <div className="flex w-[6px] shrink-0 flex-col items-end gap-[6px] border-r border-l border-r-[#6d6d6d] border-l-[#7d7d7d] bg-[#f7f7f7] pt-[2px]">
          <svg viewBox="0 0 3 6" className="h-[6px] w-[3px]"><path d="M3 0v6L0 3z" /></svg>
          <svg viewBox="0 0 3 6" className="h-[6px] w-[3px]"><path d="M0 0v6l3-3z" /></svg>
        </div>

        <section className="min-w-0 flex-1 pr-[15px] pb-4">
          <div className="h-full border-r border-b border-white">
            <TreeDrawing />
          </div>
        </section>
      </main>

      <div className={UI + " flex h-6 shrink-0 items-center border-t-2 border-b border-t-[#4a4646] border-b-[#a9b0be] pt-[3px] pl-[31px] text-[11px]"}>
        Tree: 18 tips [height = 0,1484, length = 0E0]
      </div>
      <Taskbar />
    </div>
  );
}
